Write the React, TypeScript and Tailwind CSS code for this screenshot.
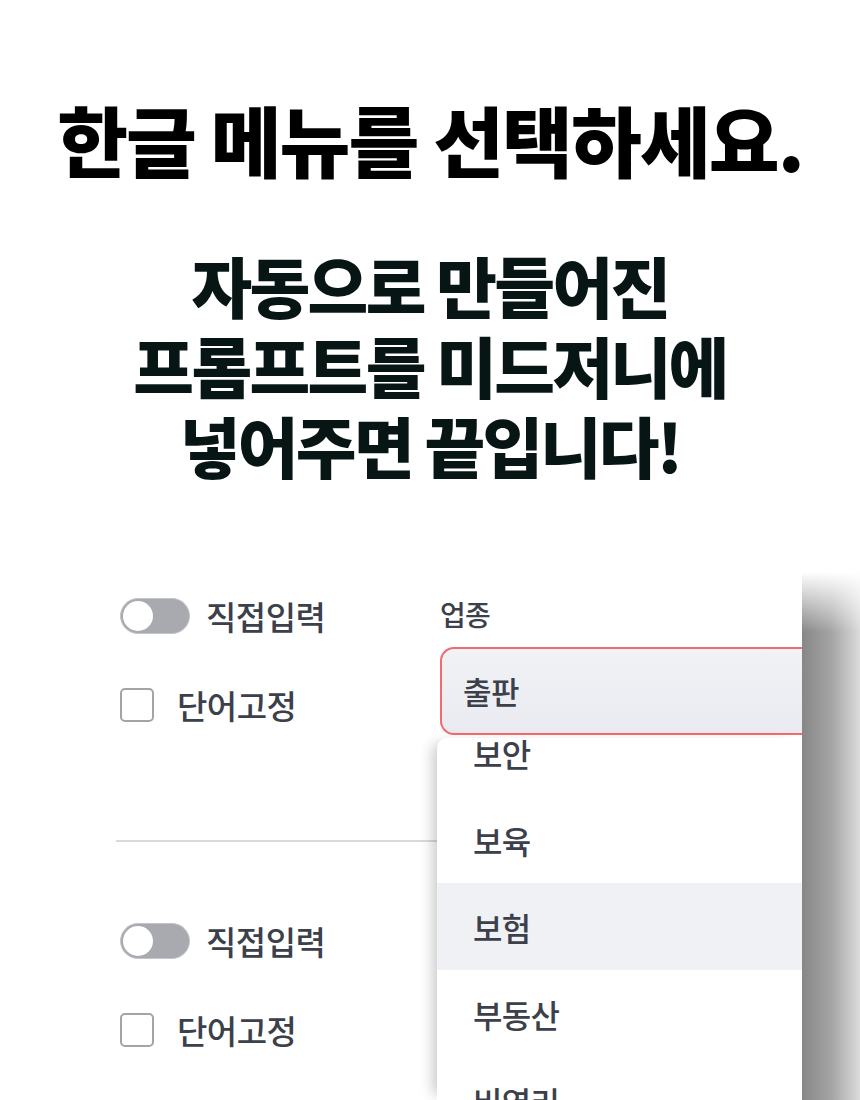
import { ReactNode } from 'react';

const KR = 'font-["Noto_Sans_CJK_KR","Noto_Sans",sans-serif]';

function Toggle() {
  return (
    <div className="w-[70px] h-[36px] rounded-full bg-[#a9aaaf] border border-[#c4c5c9] flex items-center px-[2px]">
      <div className="w-[30px] h-[30px] rounded-full bg-white" />
    </div>
  );
}

function Checkbox() {
  return <div className="w-[34px] h-[34px] rounded-[5px] border-2 border-[#a3a4a8] bg-white" />;
}

function OptionRow({ control, label, gap }: { control: ReactNode; label: string; gap: string }) {
  return (
    <div className={`flex items-center h-[44px] ${gap}`}>
      {control}
      <span className="text-[33px] font-medium tracking-[-0.015em] text-[#3b404a] leading-none">{label}</span>
    </div>
  );
}

function OptionGroup() {
  return (
    <div className="flex flex-col gap-[45px]">
      <OptionRow control={<Toggle />} label="직접입력" gap="gap-[16px]" />
      <OptionRow control={<Checkbox />} label="단어고정" gap="gap-[23px]" />
    </div>
  );
}

const items = ['보안', '보육', '보험', '부동산', '비영리'];

export default function App() {
  return (
    <div className={`w-[860px] h-[1100px] bg-white overflow-hidden flex flex-col ${KR}`}>
      {/* Headline */}
      <h1 className="mt-[100px] text-center text-[77px] leading-[78px] font-black tracking-[-0.025em] text-black">
        한글 메뉴를 선택하세요.
      </h1>

      <div className="mt-[66px] flex flex-col items-center text-[66px] leading-[80px] font-black tracking-[-0.04em] text-[#071515]">
        <p>자동으로 만들어진</p>
        <p>프롬프트를 미드저니에</p>
        <p>넣어주면 끝입니다!</p>
      </div>

      {/* Screenshot area */}
      <div className="mt-[88px] flex flex-1 min-h-0">
        {/* Left options */}
        <div className="w-[437px] flex flex-col pt-[22px]">
          <div className="pl-[120px]">
            <OptionGroup />
          </div>
          <div className="ml-[116px] mt-[113px] h-[2px] bg-[#d9d9de]" />
          <div className="pl-[120px] mt-[77px]">
            <OptionGroup />
          </div>
        </div>

        {/* Select + dropdown */}
        <div className="flex-1 flex flex-col min-w-0">
          <div className="pl-[3px] pt-[24px] text-[28px] leading-[36px] font-medium tracking-[-0.03em] text-[#3b404a]">업종</div>
          <div className="ml-[3px] mt-[15px] h-[88px] rounded-l-[14px] border-2 border-r-0 border-[#f26b70] bg-linear-to-b from-[#f1f2f6] to-[#eaebf0] flex items-center pl-[21px]">
            <span className="text-[31px] font-medium tracking-[-0.02em] text-[#3b404a]">출판</span>
          </div>
          <div className="mt-[3px] flex-1 rounded-tl-[10px] bg-white overflow-hidden shadow-[-10px_0_14px_-6px_rgba(0,0,0,0.22)]">
            <div className="-mt-[29px] flex flex-col">
              {items.map((it) => (
                <div
                  key={it}
                  className={`h-[87px] shrink-0 flex items-center pl-[36px] text-[32px] font-medium tracking-[-0.02em] text-[#3b404a] ${
                    it === '보험' ? 'bg-[#f0f1f5]' : ''
                  }`}
                >
                  {it}
                </div>
              ))}
            </div>
          </div>
        </div>

        {/* Shadow strip */}
        <div className="w-[58px] flex flex-col bg-linear-to-r from-[#878787] via-[#a4a4a4] to-[#dcdcdc]">
          <div className="h-[60px] bg-linear-to-b from-white to-transparent" />
        </div>
      </div>
    </div>
  );
}
